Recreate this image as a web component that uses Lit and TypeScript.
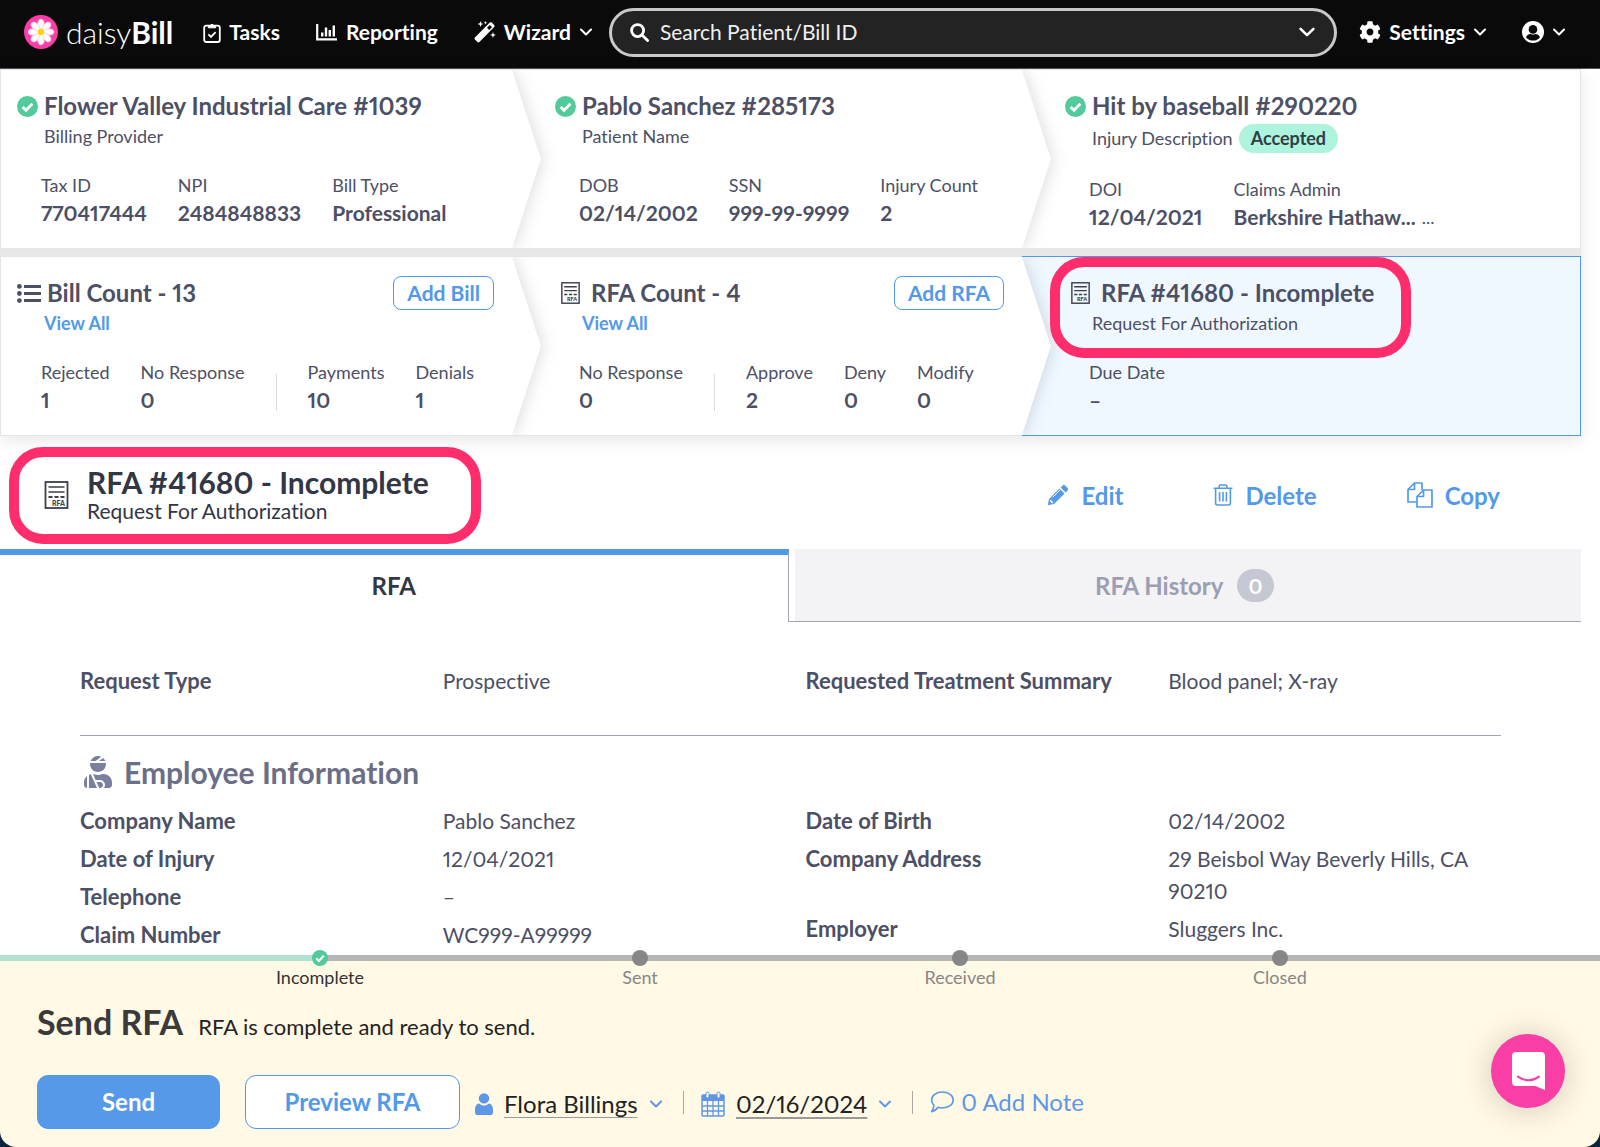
import { LitElement, html, css, svg, nothing, TemplateResult } from "lit";
import { customElement, property } from "lit/decorators.js";
import { classMap } from "lit/directives/class-map.js";

type Stat = [label: string, value: string] | "divider";

interface CardData {
  icon: "check" | "list" | "rfa";
  title: string;
  subtitle: string;
  subtitleLink?: boolean;
  pill?: string;
  action?: string;
  active?: boolean;
  stats: Stat[];
  trailing?: string;
}

const TOP_ROW: CardData[] = [
  {
    icon: "check",
    title: "Flower Valley Industrial Care #1039",
    subtitle: "Billing Provider",
    stats: [["Tax ID", "770417444"], ["NPI", "2484848833"], ["Bill Type", "Professional"]],
  },
  {
    icon: "check",
    title: "Pablo Sanchez #285173",
    subtitle: "Patient Name",
    stats: [["DOB", "02/14/2002"], ["SSN", "999-99-9999"], ["Injury Count", "2"]],
  },
  {
    icon: "check",
    title: "Hit by baseball #290220",
    subtitle: "Injury Description",
    pill: "Accepted",
    stats: [["DOI", "12/04/2021"], ["Claims Admin", "Berkshire Hathaw..."]],
    trailing: "...",
  },
];

const BOTTOM_ROW: CardData[] = [
  {
    icon: "list",
    title: "Bill Count - 13",
    subtitle: "View All",
    subtitleLink: true,
    action: "Add Bill",
    stats: [["Rejected", "1"], ["No Response", "0"], "divider", ["Payments", "10"], ["Denials", "1"]],
  },
  {
    icon: "rfa",
    title: "RFA Count - 4",
    subtitle: "View All",
    subtitleLink: true,
    action: "Add RFA",
    stats: [["No Response", "0"], "divider", ["Approve", "2"], ["Deny", "0"], ["Modify", "0"]],
  },
  {
    icon: "rfa",
    title: "RFA #41680 - Incomplete",
    subtitle: "Request For Authorization",
    active: true,
    stats: [["Due Date", "–"]],
  },
];

const STEPS = ["Incomplete", "Sent", "Received", "Closed"];

const chevron = (size: number) => html`
  <svg width=${size} height=${size} viewBox="0 0 14 14" aria-hidden="true">
    <path d="M2 4.5l5 5 5-5" fill="none" stroke="currentColor" stroke-width="2" stroke-linecap="round" stroke-linejoin="round" />
  </svg>`;

const checkCircle = (size: number) => html`
  <svg width=${size} height=${size} viewBox="0 0 21 21" aria-hidden="true">
    <circle cx="10.5" cy="10.5" r="10.5" fill="#52ca9b" />
    <path d="M5.6 10.9l3.4 3.4 6.4-6.6" fill="none" stroke="#fff" stroke-width="2.8" />
  </svg>`;

const rfaIcon = (w: number, h: number) => html`
  <svg width=${w} height=${h} viewBox="0 0 24 28" aria-hidden="true">
    <rect x="1" y="1" width="22" height="26" fill="none" stroke="#3d3f49" stroke-width="1.8" />
    <path d="M4 6h16M4 11h16" stroke="#3d3f49" stroke-width="1.7" />
    <path d="M4 16h16" stroke="#3d3f49" stroke-width="1.8" stroke-dasharray="4 2" />
    <text x="7.5" y="24.500" font-family="Lato, sans-serif" font-size="7" font-weight="900" fill="#3d3f49">RFA</text>
  </svg>`;

const listIcon = html`
  <svg width="24" height="21" viewBox="0 0 24 21" aria-hidden="true">
    <g fill="#4d5065">
      <circle cx="2.4" cy="3.4" r="2.4" /><circle cx="2.4" cy="10.5" r="2.4" /><circle cx="2.4" cy="17.6" r="2.4" />
      <rect x="7" y="2" width="17" height="3" /><rect x="7" y="9" width="17" height="3" /><rect x="7" y="16" width="17" height="3" />
    </g>
  </svg>`;

const daisy = html`
  <svg width="34" height="34" viewBox="0 0 34 34" aria-hidden="true">
    <circle cx="17" cy="17" r="17" fill="#f93fa5" />
    ${[0, 45, 90, 135, 180, 225, 270, 315].map(
      (a) => svg`<path d="M17 17C14.2 13 12.800 8.500 14.600 5.400Q17 2.400 19.400 5.400C21.200 8.500 19.800 13 17 17Z"
        fill="#fff" stroke="#f9b4dc" stroke-width="0.7" transform="rotate(${a} 17 17)" />`
    )}
    <circle cx="17" cy="17" r="3.2" fill="#f6d60f" />
  </svg>`;

const clipboardIcon = html`
  <svg width="18" height="21" viewBox="0 0 18 21" aria-hidden="true" fill="none" stroke="currentColor" stroke-width="1.8">
    <rect x="1.2" y="3.6" width="15.6" height="16.4" rx="2" />
    <path d="M5.4 5.8V3.8h1.7a2 2 0 0 1 3.8 0h1.7v2z" fill="currentColor" stroke-width="1" />
    <path d="M5.4 12.4l2.6 2.5 4.6-4.8" />
  </svg>`;

const chartIcon = html`
  <svg width="22" height="18" viewBox="0 0 22 18" aria-hidden="true" fill="none" stroke="currentColor">
    <path d="M1.2 1v15.4H21" stroke-width="2.2" />
    <path d="M6.2 13.4V9.6M10 13.4V4.6M13.8 13.4V7M17.8 13.4V2.4" stroke-width="2.4" />
  </svg>`;

const wandIcon = html`
  <svg width="22" height="22" viewBox="0 0 22 22" aria-hidden="true">
    <path d="M15.800 1.600q1-.8 1.900 0l2.500 2.500q.8.9 0 1.900L5.400 21q-.9.8-1.900 0L.9 18.500q-.8-.9 0-1.900z" fill="currentColor" />
    <path d="M13 6.800l2.200 2.200 2.800-2.800-2.200-2.200z" fill="#0a0a0a" />
    <path d="M6.500 0l.8 2.200 2.200.8-2.200.8-.8 2.200-.8-2.200L3.500 3l2.200-.8zM19 11l.8 2.200 2.200.8-2.200.8-.8 2.200-.8-2.200-2.200-.8 2.200-.8zM11.500 0l.5 1.200 1.300.5-1.300.5-.5 1.200-.5-1.200-1.200-.5 1.200-.5z" fill="currentColor" />
  </svg>`;

const searchIcon = html`
  <svg width="19" height="19" viewBox="0 0 19 19" aria-hidden="true" fill="none" stroke="currentColor" stroke-width="2.8">
    <circle cx="7.600" cy="7.600" r="6" /><path d="M12 12l5.600 5.600" stroke-linecap="round" />
  </svg>`;

const gearIcon = html`
  <svg width="22" height="22" viewBox="0 0 512 512" aria-hidden="true">
    <path fill="currentColor" d="M487.4 315.7l-42.6-24.6c4.3-23.2 4.3-47 0-70.2l42.6-24.6c4.9-2.8 7.1-8.6 5.5-14-11.1-35.6-30-67.8-54.7-94.6-3.8-4.1-10-5.1-14.8-2.3L380.8 110c-17.9-15.4-38.5-27.3-60.8-35.1V25.8c0-5.6-3.9-10.5-9.4-11.7-36.7-8.2-74.3-7.8-109.2 0-5.5 1.2-9.4 6.1-9.4 11.7V75c-22.2 7.9-42.8 19.8-60.8 35.1L88.7 85.5c-4.9-2.8-11-1.9-14.8 2.3-24.7 26.7-43.6 58.9-54.7 94.6-1.7 5.4.6 11.2 5.5 14L67.3 221c-4.3 23.2-4.3 47 0 70.2l-42.6 24.6c-4.9 2.8-7.1 8.6-5.5 14 11.1 35.6 30 67.8 54.7 94.6 3.8 4.1 10 5.1 14.8 2.3l42.6-24.6c17.9 15.4 38.5 27.3 60.8 35.1v49.2c0 5.6 3.9 10.5 9.4 11.7 36.7 8.2 74.3 7.8 109.2 0 5.500-1.200 9.400-6.100 9.400-11.700v-49.200c22.200-7.900 42.800-19.800 60.800-35.100l42.600 24.600c4.900 2.800 11 1.900 14.800-2.300 24.700-26.700 43.600-58.900 54.700-94.600 1.500-5.500-.7-11.300-5.600-14.100zM256 336c-44.100 0-80-35.900-80-80s35.900-80 80-80 80 35.900 80 80-35.900 80-80 80z" />
  </svg>`;

const userCircle = html`
  <svg width="22" height="22" viewBox="0 0 22 22" aria-hidden="true">
    <circle cx="11" cy="11" r="11" fill="currentColor" />
    <circle cx="11" cy="8.400" r="4.300" fill="#0a0a0a" />
    <path d="M4 16.200c1-2.600 3-3.300 4.600-3.200q2.400 1 4.800 0c1.600-.1 3.600.6 4.600 3.200A8.700 8.700 0 0 1 11 19.600a8.700 8.700 0 0 1-7-3.400z" fill="#0a0a0a" />
  </svg>`;

const pencilIcon = html`
  <svg width="22" height="22" viewBox="0 0 22 22" aria-hidden="true">
    <path fill="currentColor" d="M15.600 1.400a1.700 1.700 0 0 1 2.400 0l2.600 2.600a1.700 1.700 0 0 1 0 2.400l-2 2-5-5zM12.500 4.500l5 5L7 20l-6.200 1.200L2 15z" />
    <path d="M3.600 15.600l2.800 2.800-1.300 1-2.400-2.400z" fill="#fff" />
    <path d="M5.600 13.400l8-8" stroke="#fff" stroke-width="1" />
  </svg>`;

const trashIcon = html`
  <svg width="20" height="22" viewBox="0 0 20 22" aria-hidden="true" fill="none" stroke="currentColor" stroke-width="1.600">
    <path d="M.6 4.200h18.800M6.200 4V2.200Q6.200 1 7.400 1h5.200q1.200 0 1.200 1.200V4M2.600 4.400V19q0 2 2 2h10.800q2 0 2-2V4.400M6.600 8v9.400M10 8v9.400M13.400 8v9.400" />
  </svg>`;

const copyIcon = html`
  <svg width="26" height="26" viewBox="0 0 26 26" aria-hidden="true" fill="none" stroke="currentColor" stroke-width="1.700" stroke-linejoin="round">
    <path d="M10 20H1V7.500L7.500 1H15v7M7.500 1v6.500H1" />
    <path d="M10 14.500L16.500 8H25v17H10zM16.500 8v6.500H10" />
  </svg>`;

const injuredIcon = html`
  <svg width="28" height="32" viewBox="0 0 448 512" aria-hidden="true">
    <path fill="#7c80a0" d="M277.37 11.98C261.08 4.47 243.11 0 224 0c-53.69 0-99.5 33.13-118.51 80h81.19l90.69-68.02zM342.51 80c-7.9-19.47-20.67-36.2-36.49-49.52L239.99 80h102.52zM224 256c70.69 0 128-57.31 128-128 0-5.48-.95-10.7-1.61-16H97.61c-.67 5.3-1.61 10.52-1.61 16 0 70.69 57.31 128 128 128zM80 299.7V512h128.26l-98.45-221.52A132.835 132.835 0 0 0 80 299.7zM0 464c0 26.51 21.49 48 48 48V320.24C18.88 344.89 0 381.26 0 422.4V464zm256-48h-55.38l42.67 96H256c26.47 0 48-21.53 48-48s-21.53-48-48-48zm57.6-128h-16.71c-22.24 10.18-46.88 16-72.89 16s-50.65-5.82-72.89-16h-7.37l42.67 96H256c44.11 0 80 35.89 80 80 0 18.08-6.26 34.59-16.41 48H400c26.51 0 48-21.49 48-48v-41.6c0-74.23-60.17-134.4-134.4-134.4z" />
  </svg>`;

const personIcon = html`
  <svg width="18" height="22" viewBox="0 0 18 22" aria-hidden="true" fill="#5e97e8">
    <circle cx="9" cy="5.400" r="5.200" />
    <path d="M4 10.600c-2.800.5-4 3.200-4 6.800v1.800Q0 22 2.600 22h12.800Q18 22 18 19.200v-1.800c0-3.600-1.200-6.300-4-6.800a7 7 0 0 1-10 0z" />
  </svg>`;

const calendarIcon = html`
  <svg width="24" height="26" viewBox="0 0 24 26" aria-hidden="true" fill="none" stroke="#5e97e8">
    <path d="M1 4h22v6H1z" fill="#5e97e8" stroke="none" />
    <rect x="1" y="4" width="22" height="21" rx="1" stroke-width="1.500" />
    <path d="M1 15h22M1 20h22M6.500 10v15M12 10v15M17.500 10v15" stroke-width="1.300" />
    <rect x="5" y="1" width="3" height="6" rx="1.500" fill="#fff9e5" />
    <rect x="16" y="1" width="3" height="6" rx="1.500" fill="#fff9e5" />
  </svg>`;

const bubbleIcon = html`
  <svg width="24" height="22" viewBox="0 0 24 22" aria-hidden="true" fill="none" stroke="currentColor" stroke-width="1.600" stroke-linejoin="round">
    <path d="M12.400 1C18.600 1 23.200 4.500 23.200 9s-4.600 8-10.800 8q-2.400 0-4.400-.7-2.400 3.700-6.400 4.300Q3.600 17.500 4 14.400 1.600 12.200 1.600 9c0-4.500 4.600-8 10.800-8z" />
  </svg>`;

const chatIcon = html`
  <svg width="33" height="38" viewBox="0 0 33 38" aria-hidden="true">
    <path d="M4 0h25q4 0 4 4v34l-9.600-4H4q-4 0-4-4V4q0-4 4-4z" fill="#fff" />
    <path d="M6 24.600q10.500 7.400 21 0" fill="none" stroke="#f93fa5" stroke-width="2" stroke-linecap="round" />
  </svg>`;

const base = css`
  *, *::before, *::after { box-sizing: border-box; }
  button, select, input { font: inherit; color: inherit; background: none; border: 0; padding: 0; margin: 0; }
  button, select { cursor: pointer; }
  a { color: inherit; text-decoration: none; }
  h1, h2, p, dl, dd, ol { margin: 0; padding: 0; }
  svg { display: block; flex: none; }
`;

@customElement("top-bar")
class TopBar extends LitElement {
  static styles = [base, css`
    :host {
      display: flex;
      align-items: center;
      padding: 0 34px 4px 24px;
      height: 69px;
      background: #0a0a0a;
      color: #fff;
      font-size: 21px;
      font-weight: 700;
      line-height: 28px;
      border-bottom: 1px solid #55555a;
    }
    .logo { display: flex; align-items: center; gap: 8px; font-size: 30px; font-weight: 300; }
    .logo strong { font-weight: 700; }
    nav { display: flex; gap: 36px; margin: 0 16px 0 30px; }
    .item { display: flex; align-items: center; gap: 8px; }
    .tools { display: flex; gap: 35px; margin-left: 22px; }
    .search {
      display: flex;
      flex: 1;
      align-items: center;
      gap: 11px;
      height: 49px;
      padding: 0 18px;
      background: #232323;
      border: 3px solid #c9c9c9;
      border-radius: 25px;
    }
    .search input { flex: 1; min-width: 0; outline: 0; font-size: 21px; font-weight: 400; }
    .search input::placeholder { color: #f0f0f0; opacity: 1; }
  `];
  render() {
    return html`
      <a class="logo" href="#">${daisy}<span>daisy<strong>Bill</strong></span></a>
      <nav>
        <a class="item" href="#tasks">${clipboardIcon}Tasks</a>
        <a class="item" href="#reporting">${chartIcon}Reporting</a>
        <button class="item" aria-haspopup="menu">${wandIcon}Wizard${chevron(14)}</button>
      </nav>
      <label class="search">
        ${searchIcon}
        <input type="text" placeholder="Search Patient/Bill ID" aria-label="Search Patient/Bill ID" />
        ${chevron(18)}
      </label>
      <div class="tools">
        <button class="item" aria-haspopup="menu">${gearIcon}Settings${chevron(14)}</button>
        <button class="item" aria-haspopup="menu" aria-label="Account">${userCircle}${chevron(14)}</button>
      </div>`;
  }
}

@customElement("crumb-card")
class CrumbCard extends LitElement {
  @property({ attribute: false }) data!: CardData;
  @property({ type: Boolean }) first = false;
  @property({ type: Boolean }) last = false;

  static styles = [base, css`
    :host { position: relative; display: block; color: #4d5065; background: #fff; }
    .card { height: 100%; min-height: 180px; padding: 22px 18px 16px 43px; border: 1px solid #e4e5ea; border-width: 1px 0; }
    .first { padding-left: 16px; border-left-width: 1px; }
    .last { border-right-width: 1px; }
    .active { background: #f0f8ff; border-color: #5299e9; }
    .head, .below { position: relative; z-index: 1; }
    .head { display: flex; align-items: center; gap: 6px; height: 28px; }
    .rfa { padding-left: 6px; gap: 11px; }
    h2 { font-size: 24px; font-weight: 700; line-height: 28px; white-space: nowrap; }
    .action {
      margin-left: auto;
      padding: 0 13px;
      border: 1px solid #5299e9;
      border-radius: 8px;
      background: #fff;
      color: #5299e9;
      font-size: 21px;
      font-weight: 700;
      line-height: 32px;
    }
    .sub { display: flex; align-items: center; gap: 6px; margin: 4px 0 0 27px; font-size: 18px; line-height: 25px; }
    .sub a { color: #5299e9; font-weight: 700; }
    .pill { padding: 0 12px; border-radius: 15px; background: #aef3de; color: #2f4046; font-weight: 700; line-height: 29px; }
    .stats { display: flex; align-items: flex-end; gap: 31px; margin: 22px 0 0 24px; }
    dl { line-height: 28px; white-space: nowrap; }
    dt { font-size: 18px; }
    dd { font-size: 21px; font-weight: 700; }
    .more { margin-left: -25px; font-size: 18px; line-height: 28px; }
    .divider { width: 1px; height: 37px; margin-bottom: 3px; background: #d9dae2; }
    .notch { position: absolute; left: calc(100% - 20px); top: 1px; bottom: 1px; width: 80px; overflow: hidden; pointer-events: none; }
    .glow { height: 100%; filter: drop-shadow(2px 0 8px rgba(40, 44, 60, 0.16)); }
    .tip { width: 49px; height: 100%; background: #fff; clip-path: polygon(0 0, 20px 0, 100% 50%, 20px 100%, 0 100%); }
  `];

  private icon(): TemplateResult {
    if (this.data.icon === "check") return checkCircle(21);
    return this.data.icon === "list" ? listIcon : rfaIcon(19, 22);
  }

  render() {
    const d = this.data;
    return html`
      <section class=${classMap({ card: true, first: this.first, last: this.last, active: !!d.active })}>
        <div class=${classMap({ head: true, rfa: d.icon === "rfa" })}>
          ${this.icon()}
          <h2>${d.title}</h2>
          ${d.action ? html`<button class="action">${d.action}</button>` : nothing}
        </div>
        <div class="below">
          <div class="sub">
            ${d.subtitleLink ? html`<a href="#all">${d.subtitle}</a>` : html`<span>${d.subtitle}</span>`}
            ${d.pill ? html`<span class="pill">${d.pill}</span>` : nothing}
          </div>
          <div class="stats">
            ${d.stats.map((s) => s === "divider"
              ? html`<span class="divider"></span>`
              : html`<dl><dt>${s[0]}</dt><dd>${s[1]}</dd></dl>`)}
            ${d.trailing ? html`<span class="more">${d.trailing}</span>` : nothing}
          </div>
        </div>
      </section>
      ${this.last ? nothing : html`<div class="notch"><div class="glow"><div class="tip"></div></div></div>`}`;
  }
}

@customElement("send-panel")
class SendPanel extends LitElement {
  static styles = [base, css`
    :host { display: block; position: sticky; bottom: 0; background: #0b2440; color: #222; z-index: 5; }
    .panel { background: #fff9e5; border-radius: 0 0 16px 16px; }
    .track { height: 6px; background: linear-gradient(90deg, #b1e3d0 20%, #b5b5b5 20%); }
    .steps { display: grid; grid-template-columns: repeat(4, 1fr); padding: 0 10%; margin-top: -11px; list-style: none; }
    .step { display: grid; justify-items: center; color: #868686; font-size: 18px; line-height: 22px; }
    .current { color: #333; }
    .dot { width: 16px; height: 16px; border-radius: 50%; background: #868686; }
    .message { display: flex; align-items: baseline; gap: 15px; padding: 12px 37px 0; font-size: 22px; line-height: 44px; }
    h2 { font-size: 34px; font-weight: 700; color: #3a3a3a; }
    .actions { display: flex; align-items: center; padding: 26px 37px 18px; font-size: 24px; line-height: 28px; }
    .btn { height: 54px; border: 1px solid #5299e9; border-radius: 11px; font-size: 24px; font-weight: 700; }
    .send { width: 183px; margin-right: 25px; background: #5599e8; color: #fff; }
    .preview { width: 215px; margin-right: 15px; background: #fff; color: #5299e9; }
    .field { display: flex; align-items: center; gap: 11px; padding-top: 4px; color: #5e97e8; }
    .field select, .date {
      appearance: none;
      color: #222;
      text-decoration: underline;
      text-decoration-color: #999;
      text-decoration-thickness: 2px;
      text-underline-offset: 4px;
    }
    .bar { width: 1px; height: 23px; margin: 0 17px 0 20px; background: #aaa89f; }
    .note { display: flex; align-items: center; gap: 7px; color: #5e97e8; }
    .chat {
      position: absolute;
      right: 35px;
      bottom: 39px;
      display: grid;
      place-items: center;
      width: 74px;
      height: 74px;
      border-radius: 50%;
      background: #f93fa5;
      box-shadow: 0 2px 34px rgba(0, 0, 0, 0.2);
    }
  `];
  render() {
    return html`
      <div class="panel">
        <div class="track"></div>
        <ol class="steps">
          ${STEPS.map((s, i) => html`
            <li class=${classMap({ step: true, current: i === 0 })}>
              ${i === 0 ? checkCircle(16) : html`<span class="dot"></span>`}<span>${s}</span>
            </li>`)}
        </ol>
        <div class="message"><h2>Send RFA</h2><p>RFA is complete and ready to send.</p></div>
        <div class="actions">
          <button class="btn send">Send</button>
          <button class="btn preview">Preview RFA</button>
          <label class="field">
            ${personIcon}
            <select aria-label="Assigned to"><option>Flora Billings</option></select>
            ${chevron(14)}
          </label>
          <span class="bar"></span>
          <div class="field">
            ${calendarIcon}
            <button class="date" aria-haspopup="dialog">02/16/2024</button>
            ${chevron(14)}
          </div>
          <span class="bar"></span>
          <button class="note">${bubbleIcon}0 Add Note</button>
        </div>
        <button class="chat" aria-label="Open chat">${chatIcon}</button>
      </div>`;
  }
}

const details = (rows: [string, string][]) => html`
  <dl class="details">${rows.map(([k, v]) => html`<dt>${k}</dt><dd>${v}</dd>`)}</dl>`;

@customElement("app-root")
class AppRoot extends LitElement {
  static styles = [base, css`
    :host {
      display: flex;
      flex-direction: column;
      min-height: 100vh;
      background: #fff;
      color: #4d5065;
      font-family: Lato, "Open Sans", sans-serif;
      font-size: 21px;
      font-variant-ligatures: none;
      font-variant-numeric: proportional-nums;
    }
    main { flex: 1; margin-right: 19px; }
    .crumbs { position: relative; display: grid; gap: 7px; background: #e8e8e9; box-shadow: 0 4px 16px rgba(0, 0, 0, 0.1); }
    .row { display: grid; grid-template-columns: 512fr 510fr 559fr; }
    .row crumb-card:nth-child(1) { z-index: 3; }
    .row crumb-card:nth-child(2) { z-index: 2; }
    .row crumb-card:nth-child(3) { z-index: 1; }
    .mark { position: absolute; z-index: 4; border: 10px solid #ff2d6c; border-radius: 34px; pointer-events: none; }
    .mark-card { right: 170px; bottom: 78px; width: 361px; height: 101px; }
    .mark-title { left: 9px; top: 11px; width: 472px; height: 97px; }
    .title-bar { position: relative; display: flex; align-items: center; padding: 5px 81px 0 44px; height: 113px; }
    .title { margin-left: 18px; color: #333645; line-height: 26px; }
    h1 { font-size: 30px; font-weight: 700; line-height: 32px; }
    .links { display: flex; gap: 90px; margin-left: auto; }
    .links button { display: flex; align-items: center; gap: 12px; color: #5299e9; font-size: 24px; font-weight: 700; }
    .tabs { display: grid; grid-template-columns: 1fr 1fr; }
    .tab { display: flex; align-items: center; justify-content: center; gap: 13px; height: 73px; font-size: 24px; font-weight: 700; }
    .tab-on { color: #333645; border-top: 6px solid #5299e9; border-right: 1px solid #a2a4b4; margin-right: 2px; padding-bottom: 6px; }
    .tab-off { color: #9c9fb1; background: linear-gradient(90deg, #fff 6px, #f3f3f6 6px); border-bottom: 1px solid #a2a4b4; margin-left: -2px; }
    .count { padding: 0 12px; border-radius: 17px; background: #c5c8d2; color: #fff; font-size: 21px; line-height: 33px; }
    .body { padding: 43px 80px 0; }
    .columns { display: grid; grid-template-columns: 1fr 1fr; gap: 30px; }
    .details { display: grid; grid-template-columns: 1fr 1fr; gap: 6px 30px; line-height: 32px; align-content: start; }
    .details dt { font-weight: 700; font-size: 22px; white-space: nowrap; }
    .rule { height: 1px; margin: 38px 0 18px; background: #a2a4b4; }
    .section { display: flex; align-items: center; gap: 12px; padding-left: 4px; margin-bottom: 15px; color: #6b6e87; font-size: 30px; font-weight: 700; line-height: 36px; }
  `];

  private row(cards: CardData[]) {
    return html`<div class="row">
      ${cards.map((c, i) => html`<crumb-card .data=${c} ?first=${i === 0} ?last=${i === cards.length - 1}></crumb-card>`)}
    </div>`;
  }

  render() {
    return html`
      <top-bar></top-bar>
      <main>
        <div class="crumbs">
          ${this.row(TOP_ROW)} ${this.row(BOTTOM_ROW)}
          <div class="mark mark-card"></div>
        </div>
        <div class="title-bar">
          ${rfaIcon(25, 28)}
          <div class="title"><h1>RFA #41680 - Incomplete</h1><p>Request For Authorization</p></div>
          <div class="links">
            <button>${pencilIcon}Edit</button>
            <button>${trashIcon}Delete</button>
            <button>${copyIcon}Copy</button>
          </div>
          <div class="mark mark-title"></div>
        </div>
        <div class="tabs" role="tablist">
          <button class="tab tab-on" role="tab" aria-selected="true">RFA</button>
          <button class="tab tab-off" role="tab" aria-selected="false">RFA History <span class="count">0</span></button>
        </div>
        <div class="body">
          <div class="columns">
            ${details([["Request Type", "Prospective"]])}
            ${details([["Requested Treatment Summary", "Blood panel; X-ray"]])}
          </div>
          <div class="rule"></div>
          <h2 class="section">${injuredIcon}Employee Information</h2>
          <div class="columns">
            ${details([
              ["Company Name", "Pablo Sanchez"],
              ["Date of Injury", "12/04/2021"],
              ["Telephone", "–"],
              ["Claim Number", "WC999-A99999"],
            ])}
            ${details([
              ["Date of Birth", "02/14/2002"],
              ["Company Address", "29 Beisbol Way Beverly Hills, CA 90210"],
              ["Employer", "Sluggers Inc."],
            ])}
          </div>
        </div>
      </main>
      <send-panel></send-panel>`;
  }
}
